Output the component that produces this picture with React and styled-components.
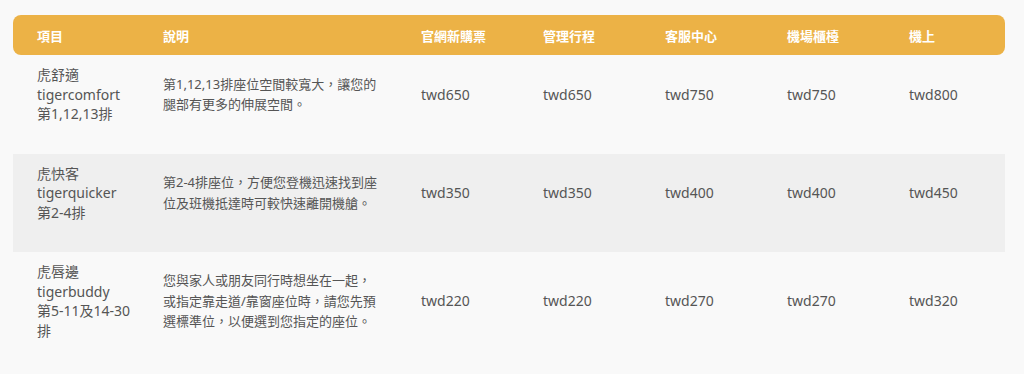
import React from 'react';
import styled, { createGlobalStyle } from 'styled-components';

const GlobalStyle = createGlobalStyle`
  body {
    margin: 0;
    background: #f9f9f9;
    font-family: "Noto Sans", "Noto Sans CJK TC", sans-serif;
  }
`;

const Page = styled.div`
  padding: 15px 19px 0 13px;
`;

const Table = styled.div`
  display: grid;
  grid-template-columns: 126px 258px repeat(4, 122px) 120px;
`;

const HeadRow = styled.div`
  display: contents;
`;

const HeadCell = styled.div`
  background: #ecb246;
  color: #fff;
  font-weight: 700;
  font-size: 13px;
  height: 40px;
  display: flex;
  align-items: center;
  padding-left: 24px;
  &:first-child { border-radius: 8px 0 0 8px; }
  &:last-child { border-radius: 0 8px 8px 0; }
`;

const Row = styled.div`
  display: contents;
`;

const Cell = styled.div`
  background: ${p => (p.$shade ? '#efefef' : 'transparent')};
  color: #555;
  font-size: 14px;
  line-height: 19.5px;
  padding: 10px 0 30px 24px;
  display: flex;
  align-items: center;
  white-space: nowrap;
`;

const Desc = styled.div`
  line-height: 20.5px;
  font-size: 13px;
`;

const columns = ['項目', '說明', '官網新購票', '管理行程', '客服中心', '機場櫃檯', '機上'];

const rows = [
  {
    item: ['虎舒適', 'tigercomfort', '第1,12,13排'],
    desc: ['第1,12,13排座位空間較寬大，讓您的', '腿部有更多的伸展空間。'],
    prices: ['twd650', 'twd650', 'twd750', 'twd750', 'twd800'],
  },
  {
    item: ['虎快客', 'tigerquicker', '第2-4排'],
    desc: ['第2-4排座位，方便您登機迅速找到座', '位及班機抵達時可較快速離開機艙。'],
    prices: ['twd350', 'twd350', 'twd400', 'twd400', 'twd450'],
  },
  {
    item: ['虎唇邊', 'tigerbuddy', '第5-11及14-30', '排'],
    desc: ['您與家人或朋友同行時想坐在一起，', '或指定靠走道/靠窗座位時，請您先預', '選標準位，以便選到您指定的座位。'],
    prices: ['twd220', 'twd220', 'twd270', 'twd270', 'twd320'],
  },
];

const Lines = ({ lines }) => (
  <div>
    {lines.map((l, i) => (
      <div key={i}>{l}</div>
    ))}
  </div>
);

export default function App() {
  return (
    <>
      <GlobalStyle />
      <Page>
        <Table>
          <HeadRow>
            {columns.map(c => (
              <HeadCell key={c}>{c}</HeadCell>
            ))}
          </HeadRow>
          {rows.map((r, i) => {
            const shade = i % 2 === 1;
            return (
              <Row key={i}>
                <Cell $shade={shade}>
                  <Lines lines={r.item} />
                </Cell>
                <Cell $shade={shade}>
                  <Desc>
                    <Lines lines={r.desc} />
                  </Desc>
                </Cell>
                {r.prices.map((p, j) => (
                  <Cell key={j} $shade={shade}>{p}</Cell>
                ))}
              </Row>
            );
          })}
        </Table>
      </Page>
    </>
  );
}
